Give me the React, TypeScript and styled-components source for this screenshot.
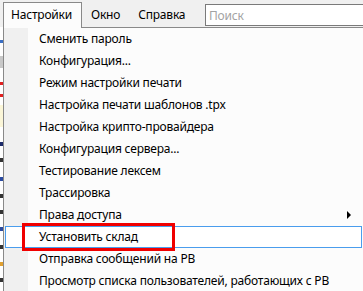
import React from "react";
import styled, { createGlobalStyle } from "styled-components";

const Global = createGlobalStyle`
  html, body {
    margin: 0;
    padding: 0;
    background: #f0f0f0;
  }
  body {
    font-family: "Noto Sans", "Liberation Sans", sans-serif;
    font-size: 12px;
    letter-spacing: -0.2px;
    color: #000;
  }
`;

const items = [
  "Сменить пароль",
  "Конфигурация...",
  "Режим настройки печати",
  "Настройка печати шаблонов .tpx",
  "Настройка крипто-провайдера",
  "Конфигурация сервера...",
  "Тестирование лексем",
  "Трассировка",
  "Права доступа",
  "Установить склад",
  "Отправка сообщений на РВ",
  "Просмотр списка пользователей, работающих с РВ",
];

// bits of the window behind the dropdown, cut off at the left edge
const marks = [
  { top: 13, h: 3, color: "#3b6fc4" },
  { top: 13, h: 12, color: "#c8c8c8" },
  { top: 14, h: 3, color: "#e02020" },
  { top: 9, h: 3, color: "#e02020" },
  { top: 8, h: 22, color: "#fbf6d8" },
  { top: 15, h: 4, color: "#1c2a6a" },
  { top: 12, h: 4, color: "#333" },
  { top: 15, h: 4, color: "#2a4aa0" },
  { top: 13, h: 4, color: "#333" },
  { top: 12, h: 4, color: "#333" },
  { top: 13, h: 4, color: "#2a4aa0" },
  { top: 14, h: 4, color: "#333" },
  { top: 13, h: 4, color: "#e0a030" },
  { top: 12, h: 4, color: "#333" },
];

const App = () => {
  return (
    <Window>
      <Global />
      <MenuBar>
        <ActiveTab>Настройки</ActiveTab>
        <BarItem>Окно</BarItem>
        <BarItem>Справка</BarItem>
        <Search placeholder="Поиск" />
      </MenuBar>
      <Body>
        <Strip>
          {marks.map((m, i) => (
            <Mark key={i} $top={m.top} $h={m.h} $color={m.color} />
          ))}
        </Strip>
        <Menu>
          {items.map((text, index) =>
            index === 9 ? (
              <HotRow key={index}>
                {text}
                <Callout />
              </HotRow>
            ) : (
              <Row key={index}>
                {text}
                {index === 8 && <Arrow />}
              </Row>
            )
          )}
        </Menu>
      </Body>
    </Window>
  );
};

export default App;

const Window = styled.div`
  width: 363px;
  height: 291px;
  overflow: hidden;
  display: flex;
  flex-direction: column;
  background: #f0f0f0;
`;

const MenuBar = styled.div`
  width: 366px;
  height: 27px;
  flex-shrink: 0;
  display: flex;
  align-items: flex-start;
  padding-left: 3px;
  box-sizing: border-box;
`;

const ActiveTab = styled.div`
  position: relative;
  z-index: 2;
  margin-top: 2px;
  height: 26px;
  box-sizing: border-box;
  padding: 0 9px 0 7px;
  line-height: 24px;
  background: #fcfcfc;
  border: 1px solid #898989;
  border-bottom: none;
`;

const BarItem = styled.div`
  margin-top: 3px;
  padding: 0 9px;
  line-height: 24px;
`;

const Search = styled.input`
  margin-left: auto;
  margin-top: 4px;
  width: 161px;
  height: 22px;
  box-sizing: border-box;
  border: 1px solid #7a7a7a;
  background: #fff;
  padding: 0 3px;
  font-family: "Noto Sans", "Liberation Sans", sans-serif;
  font-size: 12px;
  letter-spacing: -0.2px;
  outline: none;

  &::placeholder {
    color: #a3a3a3;
  }
`;

const Body = styled.div`
  flex: 1;
  display: flex;
  min-height: 0;
`;

const Strip = styled.div`
  width: 3px;
  flex-shrink: 0;
  background: #fff;
  display: flex;
  flex-direction: column;
`;

const Mark = styled.div<{ $top: number; $h: number; $color: string }>`
  margin-top: ${(p) => p.$top}px;
  height: ${(p) => p.$h}px;
  width: 3px;
  flex-shrink: 0;
  background: ${(p) => p.$color};
`;

const Menu = styled.div`
  width: 361px;
  flex-shrink: 0;
  box-sizing: border-box;
  border: 1px solid #898989;
  border-bottom: none;
  background: linear-gradient(to right, #f0f0f0 0, #f0f0f0 24px, #fcfcfc 24px);
`;

const Row = styled.div`
  height: 22px;
  line-height: 22px;
  padding-left: 35px;
  display: flex;
  align-items: center;
  justify-content: space-between;
  white-space: nowrap;
`;

const HotRow = styled.div`
  position: relative;
  height: 22px;
  line-height: 20px;
  box-sizing: border-box;
  margin: 0 1px 0 1px;
  padding-left: 33px;
  border: 1px solid #4a9ded;
  background: #fff;
  white-space: nowrap;
`;

const Callout = styled.span`
  position: absolute;
  left: 16px;
  top: -4px;
  width: 153px;
  height: 28px;
  box-sizing: border-box;
  border: 3px solid #f00000;
`;

const Arrow = styled.span`
  width: 0;
  height: 0;
  margin-right: 12px;
  border-left: 4px solid #000;
  border-top: 4px solid transparent;
  border-bottom: 4px solid transparent;
`;
